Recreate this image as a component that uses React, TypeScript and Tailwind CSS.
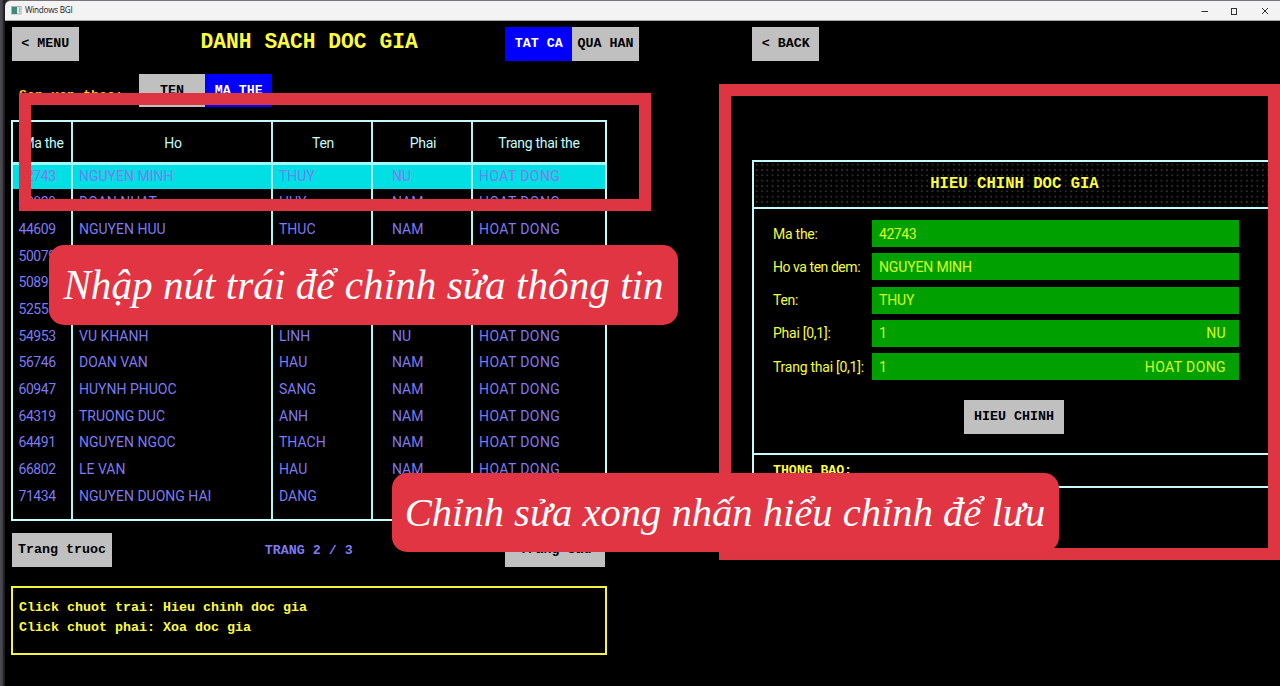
import type { ReactNode } from 'react';

const MONO = "font-['Liberation_Mono'] font-bold";

type Row = { id: string; ho?: string; ten?: string; phai?: string; active?: boolean };

const rows: Row[] = [
  { id: '42743', ho: 'NGUYEN MINH', ten: 'THUY', phai: 'NU', active: true },
  { id: '42829', ho: 'DOAN NHAT', ten: 'HUY', phai: 'NAM' },
  { id: '44609', ho: 'NGUYEN HUU', ten: 'THUC', phai: 'NAM' },
  { id: '50079' },
  { id: '50895' },
  { id: '52558' },
  { id: '54953', ho: 'VU KHANH', ten: 'LINH', phai: 'NU' },
  { id: '56746', ho: 'DOAN VAN', ten: 'HAU', phai: 'NAM' },
  { id: '60947', ho: 'HUYNH PHUOC', ten: 'SANG', phai: 'NAM' },
  { id: '64319', ho: 'TRUONG DUC', ten: 'ANH', phai: 'NAM' },
  { id: '64491', ho: 'NGUYEN NGOC', ten: 'THACH', phai: 'NAM' },
  { id: '66802', ho: 'LE VAN', ten: 'HAU', phai: 'NAM' },
  { id: '71434', ho: 'NGUYEN DUONG HAI', ten: 'DANG' },
];

const fields = [
  { label: 'Ma the:', value: '42743' },
  { label: 'Ho va ten dem:', value: 'NGUYEN MINH' },
  { label: 'Ten:', value: 'THUY' },
  { label: 'Phai [0,1]:', value: '1', hint: 'NU' },
  { label: 'Trang thai [0,1]:', value: '1', hint: 'HOAT DONG' },
];

const GRID = 'grid grid-cols-[60px_200px_100px_100px_132px]';

function Button({ children, active, className }: { children: ReactNode; active?: boolean; className: string }) {
  return (
    <button
      className={`${MONO} flex items-center justify-center whitespace-pre text-[13.33px] leading-none ${
        active ? 'bg-[#0000fc] text-white' : 'bg-[#c0c0c0] text-black'
      } ${className}`}
    >
      {children}
    </button>
  );
}

function TitleBar() {
  return (
    <header className="flex h-[21px] shrink-0 items-center rounded-tl-md border-b border-t border-b-[#a8a8a8] border-t-[#77747a] bg-[#f3f3f3]">
      <svg className="ml-[6px]" width="11" height="9" viewBox="0 0 11 9">
        <rect x="0.5" y="0.5" width="9.5" height="7.5" fill="#e4e8e8" stroke="#a9b3b3" />
        <rect x="1" y="1" width="5" height="7" fill="#3f8a7c" />
        <rect x="8" y="1.5" width="1" height="5" fill="#9db4b0" />
      </svg>
      <span className="ml-[3px] font-['Open_Sans'] text-[8.2px] leading-none tracking-[-0.28px] text-[#222]">Windows BGI</span>
      <svg className="ml-auto mr-[10px]" width="70" height="10" viewBox="0 0 70 10" fill="none" stroke="#333" strokeWidth="1">
        <path d="M1.500 5.500H8" />
        <rect x="31.500" y="2.500" width="5" height="6" />
        <path d="M62 2l6 6M68 2L62 8" />
      </svg>
    </header>
  );
}

function ReaderTable() {
  return (
    <div className="relative mt-[13px] h-[401px] w-[596px] border-2 border-[#c4fcfc] font-['Roboto'] text-[14px] leading-none">
      <div className={`${GRID} relative z-10 h-[43px] items-center border-b-[3px] border-[#a0fcfc] pt-px text-center text-[#c4fcfc]`}>
        <span className="tracking-[-0.3px]">Ma the</span>
        <span className="tracking-[-0.3px]">Ho</span>
        <span className="tracking-[-0.3px]">Ten</span>
        <span className="tracking-[-0.3px]">Phai</span>
        <span className="tracking-[-0.3px]">Trang thai the</span>
      </div>
      <div className="-mt-[2.600px] text-[#7d7af2]">
        {rows.map((r) => (
          <div
            key={r.id}
            className={`${GRID} h-[26.667px] items-center ${r.active ? 'bg-[#00e0e4]' : ''}`}
          >
            <span className="pl-[5.500px] tracking-[-0.45px]">{r.id}</span>
            <span className="pl-[6px]">{r.ho}</span>
            <span className="pl-[6px]">{r.ten}</span>
            <span className="pl-[19px]">{r.phai}</span>
            <span className="pl-[6px] tracking-[0.4px]">{r.phai ? 'HOAT DONG' : ''}</span>
          </div>
        ))}
      </div>
      <div className={`${GRID} pointer-events-none absolute inset-0 z-20`}>
        <i className="border-r-2 border-[#b4f4f4]" />
        <i className="border-r-2 border-[#b4f4f4]" />
        <i className="border-r-2 border-[#b4f4f4]" />
        <i className="border-r-2 border-[#b4f4f4]" />
      </div>
    </div>
  );
}

function EditPanel() {
  return (
    <section className="mt-[99px] h-[392px] w-[528px] border-2 border-[#c4fcfc]">
      <h2
        className={`${MONO} flex h-[47px] items-center justify-center border-b-2 border-[#c4fcfc] bg-[radial-gradient(circle,#2c362c_0.6px,transparent_1px)] bg-[size:5.333px_5.333px] pr-[3px] pt-px text-[15.6px] leading-none text-[#fcfc40]`}
      >
        HIEU CHINH DOC GIA
      </h2>
      <div className="flex h-[246px] flex-col border-b-2 border-[#c4fcfc] pt-[11px] font-['Roboto'] text-[14px] leading-none text-[#f4fc40]">
        <div className="flex flex-col gap-[6.333px] pl-[19px]">
          {fields.map((f) => (
            <div key={f.label} className="flex h-[27px] items-center">
              <span
                className={`w-[99px] shrink-0 ${f.label === 'Ho va ten dem:' ? 'tracking-[-0.45px]' : 'tracking-[-0.25px]'}`}
              >
                {f.label}
              </span>
              <div className="flex h-full w-[367px] items-center justify-between bg-[#00a000] pl-[7px] pr-[13px] text-[#d8fc20]">
                <span className={f.value === '42743' ? 'tracking-[-0.45px]' : 'tracking-[-0.15px]'}>{f.value}</span>
                <span className="tracking-[0.4px]">{f.hint}</span>
              </div>
            </div>
          ))}
        </div>
        <Button className="ml-[210px] mt-[20px] h-[33.500px] w-[100px]">HIEU CHINH</Button>
      </div>
      <div className="h-[33px] border-b-2 border-[#c4fcfc] pl-[19px] pt-[9px]">
        <p className={`${MONO} text-[13.33px] leading-none tracking-[-0.1px] text-[#fcfc40]`}>THONG BAO:</p>
      </div>
    </section>
  );
}

function Caption({ children, className }: { children: ReactNode; className: string }) {
  return (
    <div
      className={`absolute flex h-[79.500px] items-center justify-center whitespace-nowrap rounded-[15px] bg-[#e23543] font-['Liberation_Serif'] italic leading-none text-white ${className}`}
    >
      {children}
    </div>
  );
}

export default function App() {
  return (
    <div className="relative flex h-[686px] w-[1280px] overflow-hidden bg-[#2a2a2e]">
      <aside className="w-[5px] shrink-0 bg-[linear-gradient(90deg,#48484e_0_2px,#1b1b1f_4px)]" />
      <div className="flex min-w-0 flex-1 flex-col">
        <TitleBar />
        <main className="flex flex-1 bg-black pl-[6px] pt-[6px]">
          <div className="w-[741px] shrink-0">
            <div className="flex items-center pl-px">
              <Button className="h-[34px] w-[66.500px]">{'< MENU'}</Button>
              <h1 className={`${MONO} ml-[122px] w-[304.800px] pb-[3px] text-[21.3px] leading-none text-[#fcfc40]`}>DANH SACH DOC GIA</h1>
              <Button active className="h-[34px] w-[67px]">TAT CA</Button>
              <Button className="h-[34px] w-[66.500px]">QUA HAN</Button>
            </div>
            <div className="mt-[13px] flex pl-[8px]">
              <span className={`${MONO} w-[119.500px] pt-[15px] text-[13.33px] leading-none text-[#fcc820]`}>Sap xep theo:</span>
              <Button className="h-[33px] w-[66.800px]">TEN</Button>
              <Button active className="h-[33px] w-[66.700px]">MA THE</Button>
            </div>
            <ReaderTable />
            <div className="mt-[12px] flex w-[594.400px] items-center justify-between pl-px">
              <Button className="h-[34px] w-[100px]">Trang truoc</Button>
              <span className={`${MONO} pt-[2px] text-[13.33px] leading-none text-[#7d7af2]`}>TRANG 2 / 3</span>
              <Button className="h-[34px] w-[100px]">Trang sau</Button>
            </div>
            <div className={`${MONO} mt-[19px] h-[69px] w-[596px] border-2 border-[#f4f440] pl-[6px] pt-[10px] text-[13.33px] leading-[20px] text-[#fcfc40]`}>
              <p>Click chuot trai: Hieu chinh doc gia</p>
              <p>Click chuot phai: Xoa doc gia</p>
            </div>
          </div>
          <div>
            <Button className="ml-[0.400px] h-[34px] w-[66.600px]">{'< BACK'}</Button>
            <EditPanel />
          </div>
        </main>
      </div>
      <div className="absolute left-[19px] top-[93px] z-30 h-[118px] w-[632px] border-[12px] border-[#de3543]" />
      <div className="absolute left-[719px] top-[84px] z-30 h-[476px] w-[561px] border-[12px] border-[#de3543]" />
      <Caption className="left-[49px] top-[245px] z-40 w-[629px] text-[41.2px]">
        <span className="pt-[2px]">Nhập nút trái để chỉnh sửa thông tin</span>
      </Caption>
      <Caption className="left-[391.500px] top-[472.500px] z-40 w-[667px] text-[40.6px]">
        <span className="pt-[2px]">Chỉnh sửa xong nhấn hiểu chỉnh để lưu</span>
      </Caption>
    </div>
  );
}
